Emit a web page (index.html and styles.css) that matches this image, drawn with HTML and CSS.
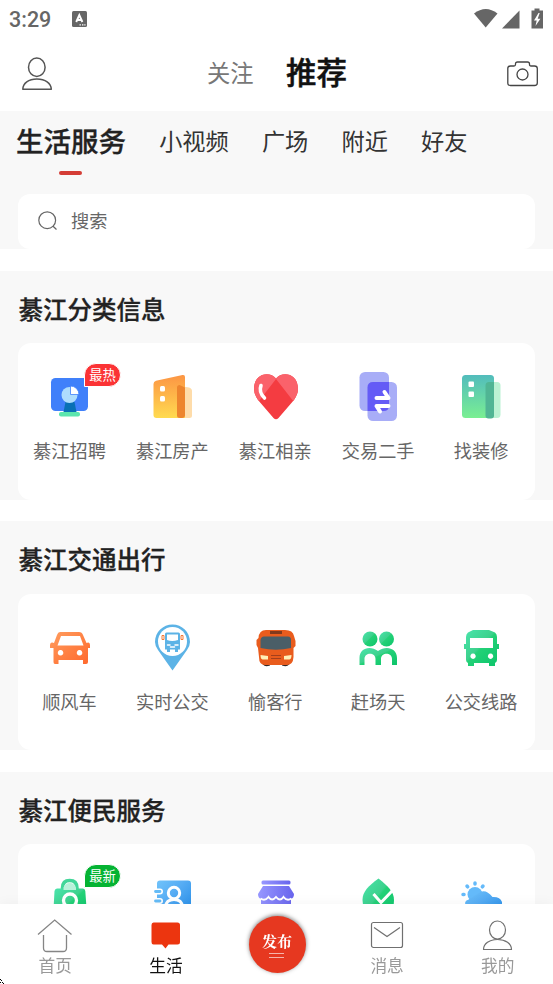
FILE: index.html
```html
<!DOCTYPE html>
<html lang="zh-CN">
<head>
<meta charset="utf-8">
<title>生活服务</title>
<link rel="stylesheet" href="styles.css">
</head>
<body>
<div class="app">
  <div class="status">
    <span class="time">3:29</span>
    <svg class="ime" width="15" height="16" viewBox="0 0 15 16"><rect width="15" height="16" rx="1.5" fill="#666"/><path d="M4.2 11 7.3 4 10.4 11M5.4 9h3.9" fill="none" stroke="#fff" stroke-width="1.900"/><path d="M7.500 13.800h1.400M10 13.800h1.400M12.300 13.800h1.200" stroke="#fff" stroke-width="1.200"/></svg>
    <svg class="signals" width="72" height="21" viewBox="0 0 72 21"><path d="M0 5.500Q11.700-3.500 23.500 5.500L11.700 19.500Z" fill="#666"/><path d="M45.500 2.500V20.500H28Z" fill="#666"/><path d="M60.500.5h5v2h3.500v18H57.500v-18h3z" fill="#666"/><path d="M64.500 5 60 12.500h2.700L61.500 18l4.900-7.300h-2.700l2-5.700z" fill="#fff"/></svg>
  </div>
  <header class="header">
    <svg class="profile" width="32" height="34" viewBox="0 0 32 34"><g fill="none" stroke="#555" stroke-width="1.500"><ellipse cx="14.800" cy="10.300" rx="8.300" ry="9.200"/><path d="M.8 32.200C1 26 6.500 22 14.900 22S29 26 29.300 32.200Z" stroke-linejoin="round"/></g></svg>
    <span class="follow">关注</span>
    <span class="recommend">推荐</span>
    <svg class="camera" width="32" height="26" viewBox="0 0 32 26"><g fill="none" stroke="#444" stroke-width="1.300"><path d="M3.500 5H7Q8.500 5 8.500 3.500V3Q8.500 1 10.500 1H20.500Q22.500 1 22.500 3V3.500Q22.500 5 24 5H27.500Q30.300 5 30.300 7.500V22Q30.300 24.500 27.500 24.500H3.500Q.8 24.500.8 22V7.500Q.8 5 3.500 5Z"/><circle cx="15.500" cy="13.500" r="5.500"/></g></svg>
  </header>
  <section class="top">
    <nav class="tabs"><span class="tab active">生活服务</span><span class="tab">小视频</span><span class="tab">广场</span><span class="tab">附近</span><span class="tab">好友</span></nav>
    <div class="search">
      <svg width="20" height="20" viewBox="0 0 20 20"><g fill="none" stroke="#666" stroke-width="1.200"><circle cx="9.200" cy="9.200" r="8.400"/><path d="M14.800 15 18.500 18.500"/></g></svg>
      <span>搜索</span>
    </div>
  </section>

  <section class="group">
    <h2>綦江分类信息</h2>
    <div class="card">
      <div class="item">
        <svg class="icon" viewBox="0 0 50 50"><rect x="6" y="6" width="37" height="33" rx="4.500" fill="#4080fa"/><path d="M20.500 30h9l2 10h-13z" fill="#0870b5"/><rect x="14" y="40" width="21" height="4.500" rx="2" fill="#5ce6ae"/><circle cx="24.500" cy="23" r="8" fill="#aeddfd"/><path d="M25.500 14v8.500H34A8.500 8.500 0 0 0 25.500 14Z" fill="#fff" stroke="#4080fa" stroke-width=".8"/></svg>
        <span class="badge hot">最热</span>
        <span class="label">綦江招聘</span>
      </div>
      <div class="item">
        <svg class="icon" viewBox="0 0 50 50"><defs><linearGradient id="gOrange" x2="0" y2="1"><stop stop-color="#fc9544"/><stop offset="1" stop-color="#ffdb50"/></linearGradient></defs><path d="M29 13.500 41 15.500Q44 16.500 44 19V43.500Q44 46 41.500 46H29Z" fill="#fedcaa"/><path d="M5.500 12Q5.500 9.500 8 8.800L34.500 3Q37 2.600 37 5V46H8.500Q5.500 46 5.500 43Z" fill="url(#gOrange)"/><path d="M29 15.500Q29 13 31.500 13L37 15.500V43Q37 46 34 46H32Q29 46 29 43.500Z" fill="#ed852e"/><g fill="#fff"><rect x="12" y="14" width="5" height="5.500" rx="1.500"/><rect x="12" y="24" width="5" height="5.500" rx="1.500"/></g></svg>
        <span class="label">綦江房产</span>
      </div>
      <div class="item">
        <svg class="icon" viewBox="0 0 50 50"><defs><clipPath id="heart"><path d="M25 6.500C31-1 47 1 47 17Q47 22 43 28L27.500 46Q25 48.500 22.500 46L7 28Q3 22 3 17C3 1 19-1 25 6.500Z"/></clipPath></defs><g clip-path="url(#heart)"><path fill="#f43c41" d="M0 0h50v50H0z"/><path d="M3 0h22v7L8 29-2 20ZM25 7 43 30 53 14 45-2H25Z" fill="#fa626b"/></g><path d="M10 13.500Q7.500 20 13.500 26" fill="none" stroke="#fff" stroke-width="3.600" stroke-linecap="round"/></svg>
        <span class="label">綦江相亲</span>
      </div>
      <div class="item">
        <svg class="icon" viewBox="0 0 50 50"><rect x="6.500" y="0" width="29.500" height="39" rx="5.500" fill="#a8adf7"/><rect x="14.500" y="10" width="29.500" height="39" rx="5.500" fill="#a8adf7"/><path d="M20 10H36V33.500Q36 39 30.500 39H14.500V15.500Q14.500 10 20 10Z" fill="#645bf6"/><path d="M23.500 26H35.500L31.500 20M35.500 34H23.500L27 39.500" fill="none" stroke="#fff" stroke-width="4" stroke-linecap="round" stroke-linejoin="round"/></svg>
        <span class="label">交易二手</span>
      </div>
      <div class="item">
        <svg class="icon" viewBox="0 0 50 50"><defs><linearGradient id="gMint" x2="0" y2="1"><stop stop-color="#52bcbc"/><stop offset="1" stop-color="#7aef92"/></linearGradient></defs><rect x="29.500" y="10" width="15" height="36" rx="3.500" fill="#bbf2d3"/><rect x="6" y="3" width="32" height="43" rx="3.500" fill="url(#gMint)"/><path d="M33 10H38V43.500Q38 46.500 35 46.500H32.500Q29.500 46.500 29.500 43.500V13.500Q29.500 10 33 10Z" fill="#50b594"/><g fill="#fff"><rect x="12.500" y="9.500" width="5.500" height="5.500" rx="1"/><rect x="12.500" y="19.500" width="5.500" height="5.500" rx="1"/></g></svg>
        <span class="label">找装修</span>
      </div>
    </div>
  </section>

  <section class="group">
    <h2>綦江交通出行</h2>
    <div class="card">
      <div class="item">
        <svg class="icon" viewBox="0 0 50 50"><defs><linearGradient id="gCar" x2="1" y2="1"><stop stop-color="#ff9e60"/><stop offset=".5" stop-color="#ff8244"/><stop offset="1" stop-color="#ff682d"/></linearGradient></defs><path fill-rule="evenodd" d="M15 9H34Q37 9 38 12L41.500 20Q45 18.500 45 22.500V25H43V39Q43 41 41 41H38V37H13.500V41H10Q8.500 41 8.500 39V25H5V22.500Q5 18.500 9 20L12 12Q13 9 15 9ZM16 13 12.500 22.500H38.500L35 13ZM15.500 27a2.800 2.800 0 1 0 .1 0ZM34.500 27a2.800 2.800 0 1 0 .1 0Z" fill="url(#gCar)"/></svg>
        <span class="label">顺风车</span>
      </div>
      <div class="item">
        <svg class="icon" viewBox="0 0 50 50"><path d="M24.500 1.500C15 1.500 7 9 7 19Q7 23 10 27L24.500 47.500 39 27Q42 23 42 19C42 9 34 1.500 24.500 1.500Z" fill="#5cb3e6"/><circle cx="24.500" cy="18.500" r="14.500" fill="#fff"/><path fill-rule="evenodd" d="M18.500 9.500H30.500Q32 9.500 32 11V26.500H30V29H27V26.500H22V29H19V26.500H17V11Q17 9.500 18.500 9.500ZM19 11.500V17Q24 19 30 17V11.500Z" fill="#5cb3e6"/><path d="M14 12.500h2v4h-2zM33 12.500h2v4h-2z" fill="#fff" stroke="#f47935"/><path d="M19.500 22H22M27 22H30M22.500 24H26.500" stroke="#fff" stroke-width="1.500" stroke-linecap="round"/></svg>
        <span class="label">实时公交</span>
      </div>
      <div class="item">
        <svg class="icon" viewBox="0 0 50 50"><path d="M12 39h7v3.500q-5 2-7-1zM31 39h7v2.500q-2 3-7 1z" fill="#332727"/><path d="M15 7H34Q42 7 43 13L44.500 18V23L42.500 25V34Q42 42 36 42H14Q8 42 8 34L7 25 5.500 22V17L7.500 15Q8 7 15 7Z" fill="#e95c1d"/><path d="M13 13.500H37Q40 13.500 40 17V25Q25 28.500 9.500 25V17Q10 13.500 13 13.500Z" fill="#4a5e67"/><path d="M19 8H31V11H19Z" fill="#83391b"/><path d="M20 32.500H30M20 35.500H30" stroke="#a43f1c"/><path d="M9.500 32 17 33V36.500H11.500Q9.500 36 9.500 32ZM40.500 32 33 33V36.500H38.500Q40.500 36 40.500 32Z" fill="#fff0b8"/></svg>
        <span class="label">愉客行</span>
      </div>
      <div class="item">
        <svg class="icon" viewBox="0 0 50 50"><defs><linearGradient id="gGreen" x2="1" y2="1"><stop stop-color="#4be5ad"/><stop offset=".45" stop-color="#3dd18d"/><stop offset=".5" stop-color="#23d177"/><stop offset="1" stop-color="#0cc46a"/></linearGradient></defs><circle cx="17" cy="16" r="7.500" fill="url(#gGreen)"/><circle cx="33.500" cy="16" r="7.500" fill="url(#gGreen)"/><path d="M6.500 42V35C6.500 25 17 22 25 28 33 22 44 25 44 35V42H39V36C39 29 28 29 28 36V42H22.500V36C22.500 29 11.500 29 11.500 36V42Z" fill="url(#gGreen)"/></svg>
        <span class="label">赶场天</span>
      </div>
      <div class="item">
        <svg class="icon" viewBox="0 0 50 50"><path fill-rule="evenodd" d="M17 7H33L39 9.500Q41 11 41 14V21H43V26H41V37Q41 39 39 40V43H33V40H18V43H12V40Q10 39 10 37V26H8V21H10V14Q10 11 12 9.500ZM14 15V25H37V15ZM17 30.500a2.700 2.700 0 1 0 .1 0ZM34.500 30.500a2.700 2.700 0 1 0 .1 0Z" fill="url(#gGreen)"/></svg>
        <span class="label">公交线路</span>
      </div>
    </div>
  </section>

  <section class="group">
    <h2>綦江便民服务</h2>
    <div class="card">
      <div class="item">
        <svg class="icon" viewBox="0 0 50 50"><path d="M17.500 17V15Q17.500 7.500 24.700 7.500T32 15V17" fill="none" stroke="#42d699" stroke-width="3.500"/><path d="M12 15.500H38Q40 15.500 40.300 18L42 42Q42 45 39 45H11Q8 45 8.200 42L9.500 18Q10 15.500 12 15.500Z" fill="url(#gGreen)"/><path d="M18.500 17V14.500Q20 10 24.700 10T31 14.500V17Z" fill="#b9f1da"/><circle cx="25" cy="27.500" r="6.500" fill="none" stroke="#fff" stroke-width="3.300"/></svg>
        <span class="badge new">最新</span>
      </div>
      <div class="item">
        <svg class="icon" viewBox="0 0 50 50"><defs><linearGradient id="gBlue" x2="1" y2="1"><stop stop-color="#70c3fa"/><stop offset=".4" stop-color="#57adf4"/><stop offset="1" stop-color="#2089e6"/></linearGradient></defs><rect x="9" y="7.500" width="34" height="37" rx="3" fill="url(#gBlue)"/><path d="M8 18.500H12M8 28H12" stroke="#fff" stroke-width="6" stroke-linecap="round"/><path d="M7.500 18.500H12M7.500 28H12" stroke="#65bcf7" stroke-width="2.800" stroke-linecap="round"/><g fill="none" stroke="#fff" stroke-width="3"><circle cx="26" cy="20" r="5.700"/><path d="M17.500 34Q18 26.500 26 26.500T34.500 34"/></g></svg>
      </div>
      <div class="item">
        <svg class="icon" viewBox="0 0 50 50"><defs><linearGradient id="gPurple" x2="1"><stop stop-color="#9797ff"/><stop offset="1" stop-color="#6864ed"/></linearGradient></defs><rect x="10.500" y="7.500" width="29" height="4" rx="1.500" fill="url(#gPurple)"/><path d="M12 13H38L43 21Q43 25 40 26V45H10V26Q7 25 7 21Z" fill="url(#gPurple)"/><path d="M9.500 25.500Q14 28.500 17.500 24 21 29 25 24 29 29 32.500 24 36 28.500 40.500 25.500" fill="none" stroke="#fff" stroke-width="2"/></svg>
      </div>
      <div class="item">
        <svg class="icon" viewBox="0 0 50 50"><path d="M25.500 5.500C15 13 9.500 19 9.500 27Q10 43 25.500 45 41 43 41 27C41 19 35 13 25.500 5.500Z" fill="url(#gGreen)"/><path d="M20.500 21 28 29.500 40 17" fill="none" stroke="#fff" stroke-width="3"/></svg>
      </div>
      <div class="item">
        <svg class="icon" viewBox="0 0 50 50"><g stroke="#64bafa" stroke-width="3.500" stroke-linecap="round"><path d="M19 10V11M11 13l.7.800M27 13l-.7.800M7 21.500H8M11 29.500l.7-.7"/></g><circle cx="19" cy="21.500" r="7.500" fill="#64bafa"/><path d="M12 40Q4 31 15 25L22 20.500Q29 14.500 36.500 24 44 23.500 46 29V37L42 44H16Z" fill="url(#gBlue)"/></svg>
      </div>
    </div>
  </section>
</div>

<nav class="bottom">
  <div class="nav-item"><svg width="36" height="34" viewBox="0 0 36 34"><path d="M1 15.500 17.700 1 34.500 15.500M6.500 16V29Q6.500 32.500 10 32.500H26Q29.500 32.500 29.500 29V16" fill="none" stroke="#858585" stroke-width="1.300"/></svg><span>首页</span></div>
  <div class="nav-item current"><svg width="36" height="34" viewBox="0 0 36 34"><path d="M5.500 3.500H29.500Q32 3.500 32 6V23Q32 25.500 29.500 25.500H20.500L17.500 29.500 14 25.500H5.500Q3.500 25.500 3.500 23V6Q3.500 3.500 5.500 3.500Z" fill="#ec350f"/></svg><span>生活</span></div>
  <div class="nav-item"><div class="publish"><b>发布</b><i></i></div></div>
  <div class="nav-item"><svg width="36" height="34" viewBox="0 0 36 34"><g fill="none" stroke="#707070" stroke-width="1.200"><rect x="2.500" y="3.500" width="31" height="25" rx="2"/><path d="M5 8.500 18 17.500 31 8.500"/></g></svg><span>消息</span></div>
  <div class="nav-item"><svg width="36" height="34" viewBox="0 0 36 34"><g fill="none" stroke="#707070" stroke-width="1.200"><ellipse cx="17.500" cy="11" rx="8" ry="9"/><path d="M3.500 30.500C3.500 24.500 9.500 20.500 17.500 20.500S31.500 24.500 31.500 30.500Z" stroke-linejoin="round"/></g></svg><span>我的</span></div>
  <svg class="corner" width="4" height="5" viewBox="0 0 4 5"><path d="M0 .5H1M1 1.500H2M0 3.500H1M2 3.500H3M3 4.500H4" stroke="#000"/></svg>
</nav>
</body>
</html>
```
FILE: styles.css
```css
* { box-sizing: border-box; }
body { margin: 0; background: #fff; overflow: hidden; font-family: Roboto, "Noto Sans CJK SC", sans-serif; }
svg { display: block; flex: none; }
.app { height: 984px; overflow: hidden; }
.status { height: 38px; display: flex; align-items: center; padding: 0 9px; color: #666; }
.time { width: 63px; font-size: 21.5px; font-weight: 500; line-height: 38px; padding-top: 1px; }
.ime { margin-top: -1px; }
.signals { margin: -1px -2px 0 auto; }
.header { height: 73px; display: flex; align-items: center; padding: 0 14px 4px 22px; white-space: nowrap; }
.profile { margin-top: 2px; }
.follow { margin: 3px 0 0 153px; font-size: 23.3px; line-height: 40px; color: #777; }
.recommend { margin: 2px 0 0 32.5px; font-size: 30.5px; font-weight: 500; line-height: 44px; color: #111; -webkit-text-stroke: .5px #111; }
.camera { margin: 3px 0 0 auto; }
.top { height: 138px; background: #f8f8f8; }
.tabs { height: 83px; padding-left: 16px; display: flex; gap: 33.2px; color: #333; font-size: 23.2px; line-height: 63px; white-space: nowrap; }
.tab.active { font-size: 27.5px; font-weight: 500; color: #222; -webkit-text-stroke: .3px #222; }
.tab.active::after { content: ""; display: block; width: 23px; height: 4px; margin: -3.5px auto 0; position: relative; left: -.5px; border-radius: 2px; background: #d43d36; }
.search { height: 55px; margin: 0 18.5px 0 18px; padding: 0 20px 2px; display: flex; align-items: center; gap: 13px; border-radius: 12px; background: #fff; color: #666; font-size: 18.2px; }
.search span { margin-top: -2px; }
.group { height: 229px; margin-top: 21.5px; background: #f8f8f8; }
.group h2 { margin: 0; height: 72.5px; padding-left: 18.5px; font-size: 24.5px; font-weight: 500; line-height: 80px; color: #222; -webkit-text-stroke: .3px #222; }
.card { height: 156.5px; margin: 0 18.5px 0 18px; padding: 29px 2px 0 0; display: grid; grid-template-columns: repeat(5, 1fr); align-items: start; background: #fff; border-radius: 13px; }
.item { position: relative; display: flex; flex-direction: column; align-items: center; }
.icon { width: 50px; height: 50px; margin-left: .6px; }
.label { margin-top: 15px; font-size: 18.2px; line-height: 30px; color: #666; white-space: nowrap; }
.badge { position: absolute; left: 66px; top: -9px; width: 37px; height: 24px; border: 1px solid #fff; border-radius: 12px 12px 12px 0; color: #fff; font-size: 13.3px; line-height: 23px; text-align: center; }
.hot { background: #fb3335; }
.new { background: #05b333; }
.bottom { position: fixed; left: 0; right: 0; bottom: 0; height: 80px; display: grid; grid-template-columns: repeat(5, 1fr); background: #fff; box-shadow: 0 -1px 12px rgba(0,0,0,.04); }
.nav-item { display: flex; flex-direction: column; align-items: center; padding-top: 15px; color: #999; font-size: 16.7px; line-height: 28px; }
.current { color: #111; }
.publish { width: 57px; height: 57px; margin: -3.5px 0 0 2px; border-radius: 50%; background: #e63820; box-shadow: 0 -1px 4px rgba(0,0,0,.5); color: #fff; display: flex; flex-direction: column; align-items: center; padding: 14px 1px 0 0; }
.publish b { font-family: "Liberation Serif", "Noto Serif CJK SC", "Noto Sans CJK SC", serif; font-size: 15px; line-height: 25px; }
.publish i { width: 15px; height: 5px; border: solid #f6b4aa; border-width: 1px 0; margin-top: -2px; }
.corner { position: absolute; left: 0; bottom: 0; }
```
